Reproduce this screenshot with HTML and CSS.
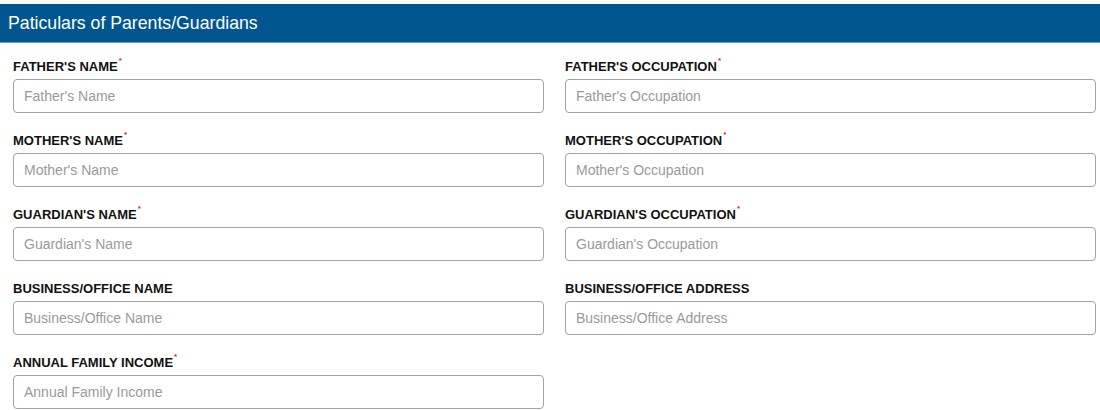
FILE: index.html
```html
<!DOCTYPE html>
<html lang="en">
<head>
    <meta charset="UTF-8">
    <meta name="viewport" content="width=device-width, initial-scale=1.0">
    <title>Parents/Guardians</title>
    <link rel="stylesheet" href="styles.css">
</head>
<body>
    <div class="panel">
        <h2 class="panel-title">Paticulars of Parents/Guardians</h2>
        <form class="form-grid">
            <div class="field">
                <label>Father's Name<span class="req">*</span></label>
                <input type="text" placeholder="Father's Name">
            </div>
            <div class="field">
                <label>Father's Occupation<span class="req">*</span></label>
                <input type="text" placeholder="Father's Occupation">
            </div>
            <div class="field">
                <label>Mother's Name<span class="req">*</span></label>
                <input type="text" placeholder="Mother's Name">
            </div>
            <div class="field">
                <label>Mother's Occupation<span class="req">*</span></label>
                <input type="text" placeholder="Mother's Occupation">
            </div>
            <div class="field">
                <label>Guardian's Name<span class="req">*</span></label>
                <input type="text" placeholder="Guardian's Name">
            </div>
            <div class="field">
                <label>Guardian's Occupation<span class="req">*</span></label>
                <input type="text" placeholder="Guardian's Occupation">
            </div>
            <div class="field">
                <label>Business/Office Name</label>
                <input type="text" placeholder="Business/Office Name">
            </div>
            <div class="field">
                <label>Business/Office Address</label>
                <input type="text" placeholder="Business/Office Address">
            </div>
            <div class="field">
                <label>Annual Family Income<span class="req">*</span></label>
                <input type="text" placeholder="Annual Family Income">
            </div>
        </form>
    </div>
</body>
</html>
```

FILE: styles.css
```css
body {
    font-family: Arial, "Liberation Sans", sans-serif;
    margin: 0;
    padding: 0;
    background-color: #fff;
}

.panel {
    padding-top: 4px;
}

.panel-title {
    margin: 0;
    height: 39px;
    line-height: 38px;
    padding-left: 8px;
    font-size: 17.7px;
    font-weight: normal;
    color: #fff;
    background-color: #02568f;
    border-bottom: 1px solid #6f9cc6;
    box-sizing: border-box;
}

.form-grid {
    display: grid;
    grid-template-columns: 531px 531px;
    column-gap: 21px;
    row-gap: 20px;
    padding: 16px 4px 0 13px;
}

.field {
    display: flex;
    flex-direction: column;
}

.field label {
    font-size: 13px;
    font-weight: bold;
    line-height: 15px;
    text-transform: uppercase;
    color: #111;
    margin-bottom: 5px;
}

.req {
    color: #d9261c;
    font-size: 8px;
    line-height: 8px;
    vertical-align: top;
    position: relative;
    top: -2px;
    margin-left: 1px;
}

.field input {
    height: 34px;
    box-sizing: border-box;
    border: 1px solid #a3a3a3;
    border-radius: 4px;
    padding: 0 10px;
    font-family: Arial, "Liberation Sans", sans-serif;
    font-size: 14px;
    color: #333;
}

.field input::placeholder {
    color: #9a9a9a;
}
```
